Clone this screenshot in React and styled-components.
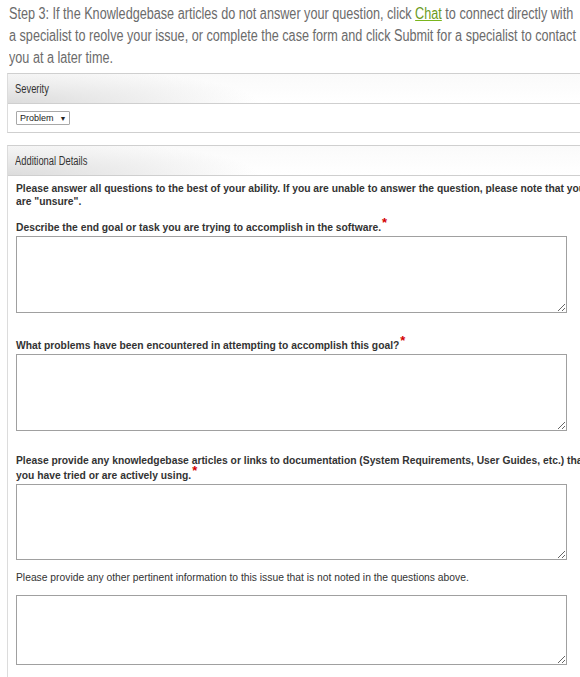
import React from 'react';
import styled, { createGlobalStyle } from 'styled-components';

const GlobalStyle = createGlobalStyle`
  html, body {
    margin: 0;
    padding: 0;
    background: #fff;
    overflow: hidden;
  }
`;

const Page = styled.div`
  width: 620px;
  padding: 3px 0 0 7px;
  font-family: 'Liberation Sans', Arial, sans-serif;
`;

// narrow face: no condensed Arial installed, so squeeze Liberation Sans
const Narrow = styled.span`
  display: inline-block;
  transform: scaleX(${(p) => p.$scale || 0.79});
  transform-origin: left top;
  white-space: ${(p) => (p.$nowrap ? 'nowrap' : 'normal')};
`;

const Intro = styled.div`
  margin: 0 0 4px 2px;
  height: 66px;
  font-size: 16px;
  line-height: 22px;
  color: #6b6b6b;

  ${Narrow} {
    width: 722px;
  }
`;

const ChatLink = styled.a`
  color: #6b9a1c;
  text-decoration: underline;
  text-decoration-color: #7ab51d;
`;

const Panel = styled.section`
  border-left: 1px solid #dcdcdc;
  border-top: 1px solid #cfcfcf;
  border-bottom: ${(p) => (p.$open ? 'none' : '1px solid #cfcfcf')};
  margin-bottom: 12px;
`;

const PanelHeader = styled.div`
  height: 29px;
  display: flex;
  align-items: center;
  padding-left: 7px;
  border-bottom: 1px solid #cfcfcf;
  font-size: 12px;
  color: #333;
  background:
    radial-gradient(ellipse 250px 36px at 0% 100%, #dcdcdc 0%, #e8e8e8 35%, rgba(255, 255, 255, 0) 100%),
    linear-gradient(to bottom, #fafafa, #fff);
`;

const PanelBody = styled.div`
  display: flex;
  flex-direction: column;
  align-items: flex-start;
  padding: ${(p) => p.$pad || '7px 0 7px 8px'};
`;

const Select = styled.span`
  display: inline-flex;
  align-items: center;
  gap: 6px;
  box-sizing: border-box;
  height: 14px;
  padding: 0 3px 0 3px;
  border: 1px solid #a8a8a8;
  border-radius: 1px;
  background: #fff;
  font-size: 9px;
  color: #222;
`;

const Arrow = styled.span`
  font-size: 7px;
  line-height: 1;
`;

const Notice = styled.p`
  margin: 0;
  width: 584px;
  font-size: 10.3px;
  font-weight: bold;
  line-height: 13px;
  color: #333;
`;

const Label = styled.label`
  display: block;
  margin: ${(p) => p.$mt || '22px'} 0 ${(p) => p.$mb || '1px'};
  font-size: 10.3px;
  font-weight: ${(p) => (p.$plain ? 'normal' : 'bold')};
  line-height: 15px;
  color: #333;
  width: 584px;
`;

const Star = styled.sup`
  color: #d40000;
  font-size: 13px;
  line-height: 0;
  margin-left: 1px;
`;

const Field = styled.textarea`
  display: block;
  box-sizing: border-box;
  width: 551px;
  height: ${(p) => p.$h || 77}px;
  margin: 0;
  border: 1px solid #a0a0a0;
  font-family: inherit;
  font-size: 11px;
`;

const questions = [
  { text: 'Describe the end goal or task you are trying to accomplish in the software.', mt: '12px', h: 77 },
  { text: 'What problems have been encountered in attempting to accomplish this goal?', mt: '25px', h: 77 },
  {
    text: 'Please provide any knowledgebase articles or links to documentation (System Requirements, User Guides, etc.) that you have tried or are actively using.',
    mt: '22px',
    h: 76,
  },
];

export default function App() {
  return (
    <>
      <GlobalStyle />
      <Page>
        <Intro>
          <Narrow>
            Step 3: If the Knowledgebase articles do not answer your question, click{' '}
            <ChatLink href="#">Chat</ChatLink> to connect directly with a specialist to reolve your issue, or
            complete the case form and click Submit for a specialist to contact you at a later time.
          </Narrow>
        </Intro>

        <Panel>
          <PanelHeader>
            <Narrow $scale={0.78} $nowrap>Severity</Narrow>
          </PanelHeader>
          <PanelBody $pad="7px 0 7px 8px">
            <Select>
              Problem <Arrow>▼</Arrow>
            </Select>
          </PanelBody>
        </Panel>

        <Panel $open>
          <PanelHeader>
            <Narrow $scale={0.78} $nowrap>Additional Details</Narrow>
          </PanelHeader>
          <PanelBody $pad="6px 0 12px 8px">
            <Notice>
              Please answer all questions to the best of your ability. If you are unable to answer the question,
              please note that you are "unsure".
            </Notice>
            {questions.map((q) => (
              <React.Fragment key={q.text}>
                <Label $mt={q.mt}>
                  {q.text}
                  <Star>*</Star>
                </Label>
                <Field $h={q.h} />
              </React.Fragment>
            ))}
            <Label $plain $mt="10px" $mb="10px">
              Please provide any other pertinent information to this issue that is not noted in the questions above.
            </Label>
            <Field $h={70} />
          </PanelBody>
        </Panel>
      </Page>
    </>
  );
}
